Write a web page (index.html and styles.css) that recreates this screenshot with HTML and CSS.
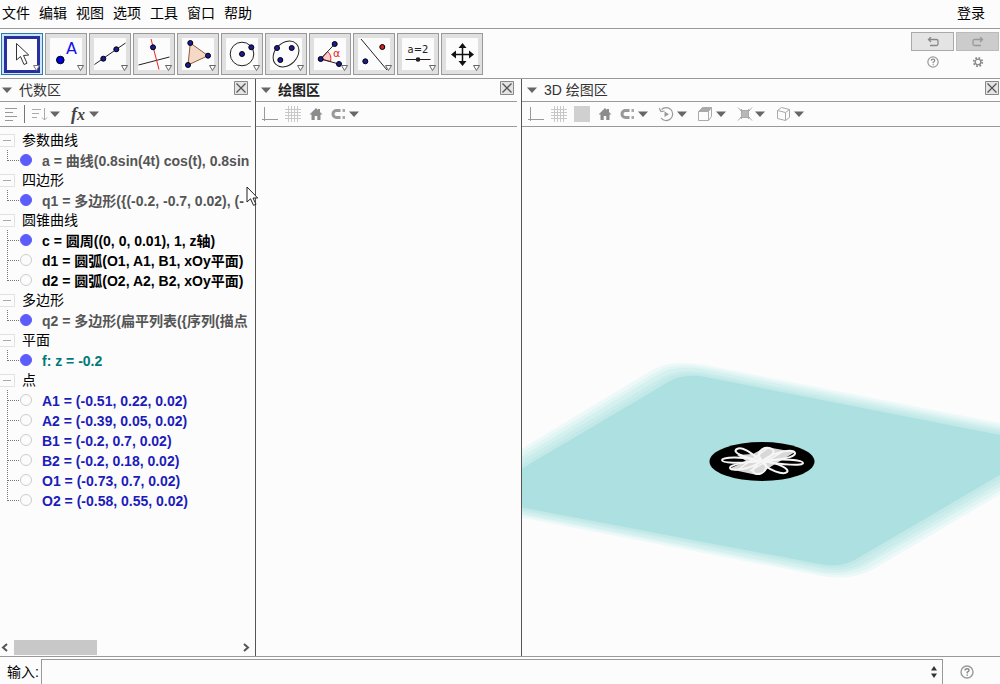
FILE: index.html
```html
<!DOCTYPE html>
<html lang="zh-CN">
<head>
<meta charset="utf-8">
<title>GeoGebra</title>
<link rel="stylesheet" href="styles.css">
</head>
<body>
<svg class="defs" aria-hidden="true">
  <symbol id="more" viewBox="0 0 40 40"><path d="M31.500 31.500h6l-3 5z" fill="#fcfcfc" stroke="#666"/></symbol>
  <symbol id="down" viewBox="0 0 10 16"><path d="M0 5.500h10l-5 5.500z" fill="#666"/></symbol>
  <symbol id="close" viewBox="0 0 14 14"><path d="M.5.5h13v13H.5z" fill="#e4e4e4" stroke="#888"/><path d="M2.500 2.500l9 9m0-9l-9 9" stroke="#555" stroke-width="1.300"/></symbol>
  <symbol id="axes" viewBox="0 0 16 16"><path d="M2.500 1v14M0 13.500h16" stroke="#999" fill="none"/></symbol>
  <symbol id="grid" viewBox="0 0 16 16"><path d="M3.500 0v16M6.500 0v16M9.500 0v16M12.500 0v16M0 3.500h16M0 6.500h16M0 9.500h16M0 12.500h16" stroke="#c8c8c8" fill="none"/></symbol>
  <symbol id="home" viewBox="0 0 16 16"><path d="M8 2L1.500 8.500h2V14h3.200v-4h2.600v4h3.200V8.500h2L12 6V3h-2v1z" fill="#8c8c8c"/></symbol>
  <symbol id="magnet" viewBox="0 0 16 16"><path d="M9.500 4.500H5.500a3.500 3.500 0 000 7h4" fill="none" stroke="#999" stroke-width="3"/><path d="M11.500 3h2.500v3h-2.500zM11.500 10h2.500v3h-2.500z" fill="#aaa"/></symbol>
  <symbol id="plus-node" viewBox="0 0 16 20"><path d="M0 4.500h14.500v12H0" fill="#fcfcfc" stroke="#e2e2e2"/><path d="M3 10.500h8" stroke="#aaa"/></symbol>
  <symbol id="branch" viewBox="0 0 20 20"><path d="M7.500 0v20M8 10.500h12" stroke="#777" stroke-dasharray="1 1" fill="none"/></symbol>
  <symbol id="branch-end" viewBox="0 0 20 20"><path d="M7.500 0v11M8 10.500h12" stroke="#777" stroke-dasharray="1 1" fill="none"/></symbol>
  <symbol id="help" viewBox="0 0 14 14"><circle cx="7" cy="7" r="6" fill="none" stroke="#999" stroke-width="1.400"/><path d="M5 5.500Q5 3.700 7 3.700T9 5.400Q9 6.300 7.200 7.200V8.500M7.200 9.500v1.300" fill="none" stroke="#888" stroke-width="1.400"/></symbol>
</svg>

<div class="app">
  <header class="menubar">
    <nav class="menus">
      <button>文件</button><button>编辑</button><button>视图</button><button>选项</button><button>工具</button><button>窗口</button><button>帮助</button>
    </nav>
    <button>登录</button>
  </header>

  <div class="toolbar">
    <div class="tools">
      <button class="tool tool-active" aria-label="移动"><svg viewBox="0 0 40 40"><path d="M3.500 3.500h33v34h-33z" fill="#fcfcfc" stroke="#2a2f9e" stroke-width="3"/><path d="M14.500 9.500V26l4-3.500 3.500 8 3-1.300-3.500-7.700 5.200-.5z" fill="#fff" stroke="#333"/><path d="M31.500 31.500h6l-3 5z" fill="#fcfcfc" stroke="#777"/></svg></button>
      <button class="tool" aria-label="点"><svg viewBox="0 0 40 40"><path d="M4 4h32v32H4z" fill="#fcfcfc"/><circle cx="14.300" cy="26" r="3.800" fill="#00d" stroke="#000"/><text x="20" y="20" class="glyph-point">A</text><use href="#more"/></svg></button>
      <button class="tool" aria-label="直线"><svg viewBox="0 0 40 40"><path d="M4 4h32v32H4z" fill="#fcfcfc"/><path d="M4.500 30.500L35.500 9" stroke="#222"/><g class="dots"><circle cx="13.300" cy="24.700" r="2.500"/><circle cx="26.300" cy="15.300" r="2.500"/></g><use href="#more"/></svg></button>
      <button class="tool" aria-label="垂线"><svg viewBox="0 0 40 40"><path d="M4 4h32v32H4z" fill="#fcfcfc"/><path d="M4.500 31l31-8" stroke="#222"/><path d="M17 5l8 30.500" stroke="#e22"/><g class="dots"><circle cx="19" cy="13.300" r="2.500"/></g><use href="#more"/></svg></button>
      <button class="tool" aria-label="多边形"><svg viewBox="0 0 40 40"><path d="M4 4h32v32H4z" fill="#fcfcfc"/><path d="M12.300 9L30 21.700 10 31z" fill="#f4d9c8" stroke="#955a35"/><g class="dots"><circle cx="12.300" cy="9" r="2.500"/><circle cx="30" cy="21.700" r="2.500"/><circle cx="10" cy="31" r="2.500"/></g><use href="#more"/></svg></button>
      <button class="tool" aria-label="圆"><svg viewBox="0 0 40 40"><path d="M4 4h32v32H4z" fill="#fcfcfc"/><circle cx="20" cy="20" r="11.800" fill="none" stroke="#222"/><g class="dots"><circle cx="20" cy="20" r="2.500"/><circle cx="29.300" cy="13.300" r="2.500"/></g><use href="#more"/></svg></button>
      <button class="tool" aria-label="椭圆"><svg viewBox="0 0 40 40"><path d="M4 4h32v32H4z" fill="#fcfcfc"/><ellipse cx="20" cy="20" rx="14.500" ry="11" transform="rotate(-45 20 20)" fill="none" stroke="#222"/><g class="dots"><circle cx="11" cy="14" r="2.500"/><circle cx="25.700" cy="14" r="2.500"/><circle cx="14.300" cy="26" r="2.500"/></g><use href="#more"/></svg></button>
      <button class="tool" aria-label="角"><svg viewBox="0 0 40 40"><path d="M4 4h32v32H4z" fill="#fcfcfc"/><path d="M10.700 25L17.500 17.500Q22 21 20.500 27.500z" fill="#fcc" stroke="#e22"/><path d="M24.700 10l-14 15L29 30" fill="none" stroke="#222"/><text x="23" y="23" class="glyph-angle">α</text><g class="dots"><circle cx="24.700" cy="10" r="2.500"/><circle cx="10.700" cy="25" r="2.500"/><circle cx="29" cy="30" r="2.500"/></g><use href="#more"/></svg></button>
      <button class="tool" aria-label="轴对称"><svg viewBox="0 0 40 40"><path d="M4 4h32v32H4z" fill="#fcfcfc"/><path d="M7 5l26 31" stroke="#222"/><g class="dots"><circle cx="28.300" cy="13" r="2.500" class="dot-red"/><circle cx="11.300" cy="27.300" r="2.500"/></g><use href="#more"/></svg></button>
      <button class="tool" aria-label="滑动条"><svg viewBox="0 0 40 40"><path d="M4 4h32v32H4z" fill="#fcfcfc"/><text x="20" y="19" class="glyph-slider">a=2</text><path d="M7.500 25.500h25" stroke="#222"/><circle cx="20" cy="25.500" r="2.300" fill="#222"/><use href="#more"/></svg></button>
      <button class="tool" aria-label="移动视图"><svg viewBox="0 0 40 40"><path d="M4 4h32v32H4z" fill="#fcfcfc"/><path d="M20.500 12v16M12 20.500h16" stroke="#111" stroke-width="1.500"/><path d="M20.500 9l4 5h-8zM20.500 32l4-5h-8zM9 20.500l5-4v8zM32 20.500l-5-4v8z" fill="#111"/><use href="#more"/></svg></button>
    </div>
    <div class="actions">
      <button class="history" aria-label="撤销"><svg viewBox="0 0 12 10"><path d="M4 0L1.500 2.500 4 5M2 2.500h7.500q1.500 0 1.500 1.500v3q0 1.500-1.500 1.500H3" fill="none" stroke="#888" stroke-width="1.300"/></svg></button>
      <button class="history history-off" aria-label="重做" disabled><svg viewBox="0 0 12 10"><path d="M8 0l2.500 2.500L8 5M10 2.500H2.500Q1 2.500 1 4v3q0 1.500 1.500 1.500H9" fill="none" stroke="#999" stroke-width="1.300"/></svg></button>
      <button class="mini" aria-label="帮助"><svg viewBox="0 0 14 14"><use href="#help"/></svg></button>
      <button class="mini" aria-label="设置"><svg viewBox="0 0 14 14"><circle cx="7" cy="7" r="3.300" fill="none" stroke="#888" stroke-width="1.600"/><circle cx="7" cy="7" r="5" fill="none" stroke="#888" stroke-width="2" stroke-dasharray="2 1.930"/></svg></button>
    </div>
  </div>

  <main class="panels">
    <section class="panel panel-ruled">
      <div class="panel-head"><button class="title"><svg class="caret" viewBox="0 0 10 16"><use href="#down"/></svg>代数区</button><button class="close" aria-label="关闭"><svg viewBox="0 0 14 14"><use href="#close"/></svg></button></div>
      <div class="stylebar stylebar-algebra">
        <button class="style" aria-label="辅助对象"><svg class="icon" viewBox="0 0 16 16"><path d="M1 2.500h12M1 6.500h8M1 10.500h12M1 14.500h8" stroke="#999"/></svg></button>
        <span class="rule"></span>
        <button class="style" aria-label="排序"><svg class="icon" viewBox="0 0 16 16"><path d="M0 3.500h9M0 7.500h7M0 11.500h5M12.500 2v12M10 11.500l2.500 2.500 2.500-2.500" fill="none" stroke="#aaa"/></svg><svg class="caret" viewBox="0 0 10 16"><use href="#down"/></svg></button>
        <button class="style style-fx" aria-label="函数"><i class="fx">f<small>x</small></i><svg class="caret" viewBox="0 0 10 16"><use href="#down"/></svg></button>
      </div>
      <div class="tree">
        <div class="group"><button class="fold"><svg viewBox="0 0 16 20"><use href="#plus-node"/></svg>参数曲线</button></div>
        <label class="item item-aux"><svg class="branch" viewBox="0 0 20 20"><use href="#branch-end"/></svg><input type="checkbox" checked><span>a = 曲线(0.8sin(4t) cos(t), 0.8sin</span></label>
        <div class="group"><button class="fold"><svg viewBox="0 0 16 20"><use href="#plus-node"/></svg>四边形</button></div>
        <label class="item item-aux"><svg class="branch" viewBox="0 0 20 20"><use href="#branch-end"/></svg><input type="checkbox" checked><span>q1 = 多边形({(-0.2, -0.7, 0.02), (-</span></label>
        <div class="group"><button class="fold"><svg viewBox="0 0 16 20"><use href="#plus-node"/></svg>圆锥曲线</button></div>
        <label class="item"><svg class="branch" viewBox="0 0 20 20"><use href="#branch"/></svg><input type="checkbox" checked><span>c = 圆周((0, 0, 0.01), 1, z轴)</span></label>
        <label class="item"><svg class="branch" viewBox="0 0 20 20"><use href="#branch"/></svg><input type="checkbox"><span>d1 = 圆弧(O1, A1, B1, xOy平面)</span></label>
        <label class="item"><svg class="branch" viewBox="0 0 20 20"><use href="#branch-end"/></svg><input type="checkbox"><span>d2 = 圆弧(O2, A2, B2, xOy平面)</span></label>
        <div class="group"><button class="fold"><svg viewBox="0 0 16 20"><use href="#plus-node"/></svg>多边形</button></div>
        <label class="item item-aux"><svg class="branch" viewBox="0 0 20 20"><use href="#branch-end"/></svg><input type="checkbox" checked><span>q2 = 多边形(扁平列表({序列(描点</span></label>
        <div class="group"><button class="fold"><svg viewBox="0 0 16 20"><use href="#plus-node"/></svg>平面</button></div>
        <label class="item item-plane"><svg class="branch" viewBox="0 0 20 20"><use href="#branch-end"/></svg><input type="checkbox" checked><span>f: z = -0.2</span></label>
        <div class="group"><button class="fold"><svg viewBox="0 0 16 20"><use href="#plus-node"/></svg>点</button></div>
        <label class="item item-point"><svg class="branch" viewBox="0 0 20 20"><use href="#branch"/></svg><input type="checkbox"><span>A1 = (-0.51, 0.22, 0.02)</span></label>
        <label class="item item-point"><svg class="branch" viewBox="0 0 20 20"><use href="#branch"/></svg><input type="checkbox"><span>A2 = (-0.39, 0.05, 0.02)</span></label>
        <label class="item item-point"><svg class="branch" viewBox="0 0 20 20"><use href="#branch"/></svg><input type="checkbox"><span>B1 = (-0.2, 0.7, 0.02)</span></label>
        <label class="item item-point"><svg class="branch" viewBox="0 0 20 20"><use href="#branch"/></svg><input type="checkbox"><span>B2 = (-0.2, 0.18, 0.02)</span></label>
        <label class="item item-point"><svg class="branch" viewBox="0 0 20 20"><use href="#branch"/></svg><input type="checkbox"><span>O1 = (-0.73, 0.7, 0.02)</span></label>
        <label class="item item-point"><svg class="branch" viewBox="0 0 20 20"><use href="#branch-end"/></svg><input type="checkbox"><span>O2 = (-0.58, 0.55, 0.02)</span></label>
      </div>
      <div class="scroll">
        <button aria-label="向左"><svg viewBox="0 0 14 16"><path d="M7 4L3 7.500 7 11" fill="none" stroke="#555" stroke-width="2"/></svg></button>
        <div class="track"><div class="thumb"></div></div>
        <button aria-label="向右"><svg viewBox="0 0 14 16"><path d="M7 4l4 3.500L7 11" fill="none" stroke="#555" stroke-width="2"/></svg></button>
      </div>
      <svg class="pointer" viewBox="0 0 13 21"><path d="M1 1v15l3.500-3.200 3 6.500 2.500-1-3-6.300h4.700z" fill="#fff" stroke="#222"/></svg>
    </section>

    <section class="panel panel-ruled">
      <div class="panel-head"><button class="title title-active"><svg class="caret" viewBox="0 0 10 16"><use href="#down"/></svg>绘图区</button><button class="close" aria-label="关闭"><svg viewBox="0 0 14 14"><use href="#close"/></svg></button></div>
      <div class="stylebar">
        <button class="style" aria-label="坐标轴"><svg class="icon" viewBox="0 0 16 16"><use href="#axes"/></svg></button>
        <button class="style" aria-label="网格"><svg class="icon" viewBox="0 0 16 16"><use href="#grid"/></svg></button>
        <button class="style" aria-label="标准视图"><svg class="icon" viewBox="0 0 16 16"><use href="#home"/></svg></button>
        <button class="style" aria-label="捕捉"><svg class="icon" viewBox="0 0 16 16"><use href="#magnet"/></svg><svg class="caret" viewBox="0 0 10 16"><use href="#down"/></svg></button>
      </div>
    </section>

    <section class="panel">
      <div class="panel-head"><button class="title"><svg class="caret" viewBox="0 0 10 16"><use href="#down"/></svg>3D 绘图区</button><button class="close close-edge" aria-label="关闭"><svg viewBox="0 0 14 14"><use href="#close"/></svg></button></div>
      <div class="stylebar">
        <button class="style" aria-label="坐标轴"><svg class="icon" viewBox="0 0 16 16"><use href="#axes"/></svg></button>
        <button class="style" aria-label="网格"><svg class="icon" viewBox="0 0 16 16"><use href="#grid"/></svg></button>
        <button class="style" aria-label="平面"><svg class="icon" viewBox="0 0 16 16"><path d="M0 0h16v16H0z" fill="#d0d0d0"/></svg></button>
        <button class="style" aria-label="标准视图"><svg class="icon" viewBox="0 0 16 16"><use href="#home"/></svg></button>
        <button class="style" aria-label="捕捉"><svg class="icon" viewBox="0 0 16 16"><use href="#magnet"/></svg><svg class="caret" viewBox="0 0 10 16"><use href="#down"/></svg></button>
        <button class="style" aria-label="旋转"><svg class="icon" viewBox="0 0 16 16"><path d="M2.500 3.500A6.500 6.500 0 112 12M0 2l2 3.500 3.500-.5" fill="none" stroke="#999" stroke-width="1.200"/><path d="M5.500 5.500l4.500 2.700L5.500 11z" fill="#999"/></svg><svg class="caret" viewBox="0 0 10 16"><use href="#down"/></svg></button>
        <button class="style" aria-label="视角"><svg class="icon" viewBox="0 0 16 16"><path d="M.5 5.500l4-4h9l-3 4z" fill="#aaa"/><path d="M.5 5.500h10v9H.5zM10.500 5.500l3-4v9l-3 4M.5 5.500l4-4h9" fill="none" stroke="#aaa"/></svg><svg class="caret" viewBox="0 0 10 16"><use href="#down"/></svg></button>
        <button class="style" aria-label="剪裁"><svg class="icon" viewBox="0 0 16 16"><path d="M4 4h8v8H4z" fill="#b8b8b8"/><path d="M1 1.500l3 3M15 1.500l-3 3M1 14.500l3-3M15 14.500l-3-3M3 4.500h10M3 11.500h10M4.500 3v10M11.500 3v10" stroke="#aaa"/></svg><svg class="caret" viewBox="0 0 10 16"><use href="#down"/></svg></button>
        <button class="style" aria-label="投影"><svg class="icon" viewBox="0 0 16 16"><path d="M1.500 4.500l8 2v8l-8-2zM9.500 6.500l4-3v8l-4 3M1.500 4.500l4-3 8 2" fill="none" stroke="#aaa"/></svg><svg class="caret" viewBox="0 0 10 16"><use href="#down"/></svg></button>
      </div>
      <svg class="scene" viewBox="0 0 478 529" preserveAspectRatio="xMidYMid slice">
        <path fill="#edf9f8" d="M-87 374L130 243Q148 232 183 238L569 314 350 443Q330 454 300 449z"/>
        <path fill="#e1f5f4" d="M-80 373L134 245Q150 235 182 240L561 315 347 441Q328 451 301 447z"/>
        <path fill="#d4f0ef" d="M-72 373L137 247Q152 238 181 242L553 316 344 438Q327 448 301 445z"/>
        <path fill="#caeceb" d="M-65 372L141 250Q154 242 180 245L545 316 342 436Q325 446 302 442z"/>
        <path fill="#c2e8e8" d="M-57 372L144 252Q156 245 179 247L537 317 339 433Q324 443 302 440z"/>
        <path fill="#ade0e1" d="M-50 371L148 254Q158 248 178 249L529 318 336 431Q322 440 303 438z"/>
        <ellipse cx="240" cy="334.500" rx="52.500" ry="19.500"/>
        <path fill="#d8d8d8" d="M244 320L273 325 235 348 207 342 224 334 215 328 231 327z"/>
        <g fill="none" stroke="#f6f6f6" stroke-width="2">
          <path d="M240 334C216 337 200 336 200 333S220 329 240 334"/>
          <path d="M240 334C222 331 209 325 215 322S230 327 240 334"/>
          <path d="M240 334C233 326 240 320 247 321S254 328 240 334"/>
          <path d="M240 334C255 323 272 322 273 326S258 333 240 334"/>
          <path d="M240 334C260 331 281 333 281 336S262 338 240 334"/>
          <path d="M240 334C257 336 268 342 265 345S245 344 240 334"/>
          <path d="M240 334C250 340 240 348 235 347S228 341 240 334"/>
          <path d="M240 334C225 344 209 344 208 341S225 334 240 334"/>
          <path d="M217 342L246 321M228 344L260 325" stroke-width="1.500"/>
        </g>
      </svg>
    </section>
  </main>

  <footer class="inputbar">
    <label for="command">输入:</label>
    <div class="field"><input id="command" type="text"><button class="spin" aria-label="历史"><svg viewBox="0 0 8 14"><path d="M1 5.500h6L4 1zM1 8.500h6L4 13z" fill="#333"/></svg></button></div>
    <button class="mini mini-help" aria-label="输入帮助"><svg viewBox="0 0 14 14"><use href="#help"/></svg></button>
  </footer>
</div>
</body>
</html>
```
FILE: styles.css
```css
* { box-sizing: border-box; }
body {
  margin: 0;
  background: #fcfcfc;
  color: #000;
  font: 14px/20px "Liberation Sans", "Noto Sans CJK SC", sans-serif;
}
button {
  padding: 0;
  border: 0;
  background: none;
  color: inherit;
  font: inherit;
}
svg { display: block; }
.defs { display: none; }
.app {
  display: flex;
  flex-direction: column;
  height: 100vh;
  overflow: hidden;
}

.menubar {
  display: flex;
  justify-content: space-between;
  height: 29px;
  padding: 0 15px 2px 2px;
  border-bottom: 1px solid #999;
}
.menus { display: flex; gap: 9px; }

.toolbar {
  display: flex;
  justify-content: space-between;
  align-items: flex-start;
  height: 50px;
  padding: 4px 1px 0;
  border-bottom: 1px solid #999;
}
.tools { display: flex; gap: 2px; }
.tool {
  width: 42px;
  height: 42px;
  border: 1px solid #999;
  background: #e0e0e0;
}
.tool svg { width: 40px; height: 40px; }
.tool-active { border-color: #2a7ab0; background: #cbe6fa; }
.dots { fill: #1a1a9a; stroke: #000; stroke-width: 1; }
.dot-red { fill: #c22; }
.glyph-point { fill: #11e; font: 16px "DejaVu Sans", sans-serif; }
.glyph-angle { fill: #e22; font: 11px "DejaVu Sans", sans-serif; }
.glyph-slider { fill: #222; font: 10px "DejaVu Sans", sans-serif; text-anchor: middle; }

.actions {
  display: grid;
  grid-template-columns: 43px 43px;
  gap: 5px 2px;
  justify-items: center;
  align-items: center;
  margin-top: -1px;
}
.history {
  display: grid;
  place-items: center;
  width: 43px;
  height: 19px;
  border: 1px solid #aaa;
  background: #e4e4e4;
}
.history-off { background: #ccc; border-color: #bbb; }
.history svg { width: 12px; height: 10px; }
.mini svg { width: 12px; height: 12px; }
.mini-help svg { width: 14px; height: 14px; }

.panels {
  display: grid;
  grid-template-columns: 256px 266px 1fr;
  flex: 1;
  min-height: 0;
}
.panel {
  position: relative;
  display: flex;
  flex-direction: column;
  min-width: 0;
  min-height: 0;
}
.panel-ruled { padding-right: 4px; border-right: 1px solid #555; }
.panel-head {
  display: flex;
  flex: none;
  justify-content: space-between;
  align-items: flex-start;
  height: 23px;
  padding-left: 2px;
  border-bottom: 1px solid #999;
}
.title {
  display: flex;
  align-items: center;
  gap: 7px;
  height: 22px;
  color: #333;
}
.panel:last-child .title, .title-active { padding-left: 3px; }
.title-active { color: #222; font-weight: bold; }
.close { margin: 2px 3px 0 0; }
.close-edge { margin-right: 1px; }
.close svg { width: 14px; height: 14px; }
.icon { width: 16px; height: 16px; }
.caret { width: 10px; height: 16px; }
.stylebar {
  display: flex;
  flex: none;
  align-items: center;
  gap: 7px;
  height: 25px;
  padding-left: 6px;
  border-bottom: 1px solid #999;
}
.style { display: flex; align-items: center; gap: 2px; }
.style:has(.caret) { padding-right: 4px; }
.stylebar-algebra { padding-left: 4px; }
.stylebar-algebra .style-fx { gap: 4px; }
.rule { width: 1px; height: 18px; margin-left: -3px; background: #777; }
.fx {
  color: #444;
  font: italic bold 18px/18px "Liberation Serif", serif;
}
.fx small { font-size: 16px; }

.tree {
  flex: 1;
  min-height: 0;
  padding-top: 3px;
  overflow: hidden;
}
.group, .item {
  display: flex;
  align-items: center;
  height: 20px;
  overflow: hidden;
  white-space: nowrap;
}
.fold { display: flex; gap: 6px; }
.fold svg { flex: none; width: 16px; height: 20px; }
.item { font-weight: bold; }
.item span { padding-top: 2px; }
.branch { flex: none; width: 20px; height: 20px; }
.item input {
  flex: none;
  appearance: none;
  width: 12px;
  height: 12px;
  margin: 0 10px 0 0;
  border: 1px solid #ccc;
  border-radius: 50%;
  background: #fcfcfc;
}
.item input:checked { border-color: #5c5cfa; background: #5c5cfa; }
.item-aux { color: #555; }
.item-plane { color: #007a78; }
.item-point { color: #1c1cba; }

.scroll { display: flex; flex: none; height: 16px; }
.scroll svg { width: 14px; height: 16px; }
.track { flex: 1; }
.thumb { width: 37%; height: 15px; background: #c8c8c8; }
.pointer {
  position: absolute;
  top: 107px;
  right: -4px;
  z-index: 1;
  width: 13px;
  height: 21px;
}
.scene { flex: 1; width: 100%; min-height: 0; }

.inputbar {
  display: flex;
  align-items: center;
  flex: none;
  height: 28px;
  padding: 2px 26px 0 7px;
  border-top: 1px solid #999;
}
.inputbar label { width: 34px; }
.field {
  display: flex;
  flex: 1;
  align-self: stretch;
  margin-right: 17px;
  border: 1px solid #999;
  border-bottom: 0;
}
.field input {
  flex: 1;
  min-width: 0;
  border: 0;
  outline: 0;
  background: none;
  font: inherit;
}
.spin { padding-right: 4px; }
.spin svg { width: 8px; height: 14px; }
```
